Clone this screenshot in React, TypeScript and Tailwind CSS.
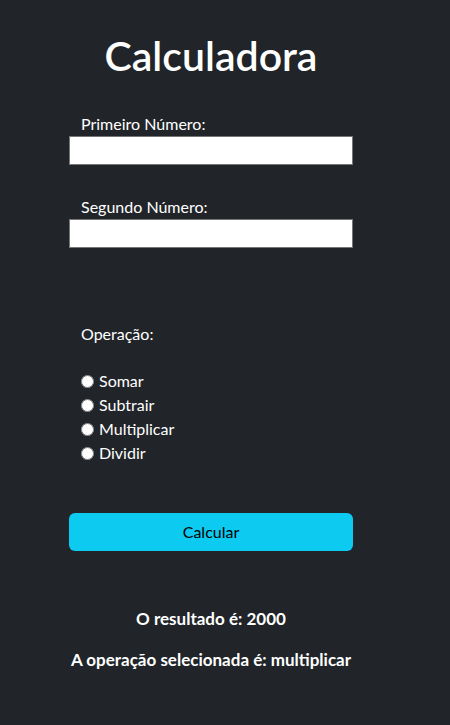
import React, { useState } from 'react';

const ops = [
  { value: 'somar', label: 'Somar' },
  { value: 'subtrair', label: 'Subtrair' },
  { value: 'multiplicar', label: 'Multiplicar' },
  { value: 'dividir', label: 'Dividir' },
];

const App: React.FC = () => {
  const [a, setA] = useState('');
  const [b, setB] = useState('');
  const [op, setOp] = useState('');

  return (
    <div className="min-h-screen bg-[#212529] text-white font-['Lato','Noto_Sans',sans-serif] pt-[32px]">
      <div className="ml-[69px] w-[284px]">
        <h1 className="text-center text-[41px] leading-[48px] font-semibold">Calculadora</h1>

        <label className="block mt-[32px] px-3 text-[16px] leading-[24px]">Primeiro Número:</label>
        <input
          type="number"
          value={a}
          onChange={e => setA(e.target.value)}
          className="block w-full h-[29px] bg-white text-black border border-[#767676] px-2 outline-none"
        />

        <label className="block mt-[30px] px-3 text-[16px] leading-[24px]">Segundo Número:</label>
        <input
          type="number"
          value={b}
          onChange={e => setB(e.target.value)}
          className="block w-full h-[29px] bg-white text-black border border-[#767676] px-2 outline-none"
        />

        <p className="mt-[74px] px-3 text-[16px] leading-[24px]">Operação:</p>

        <div className="mt-[23px] px-3 flex flex-col">
          {ops.map(o => (
            <label key={o.value} className="flex items-center h-[24px] text-[16px]">
              <input
                type="radio"
                name="op"
                value={o.value}
                checked={op === o.value}
                onChange={() => setOp(o.value)}
                className="m-0 mr-[5px] w-[13px] h-[13px]"
              />
              {o.label}
            </label>
          ))}
        </div>

        <button className="mt-[48px] w-full h-[38px] rounded-[6px] bg-[#0dcaf0] text-black text-[16px]">
          Calcular
        </button>

        <p className="mt-[56px] text-center font-bold text-[17px] leading-[24px] whitespace-nowrap">O resultado é: 2000</p>
        <p className="mt-[17px] text-center font-bold text-[17px] leading-[24px] whitespace-nowrap">A operação selecionada é: multiplicar</p>
      </div>
    </div>
  );
};

export default App;
